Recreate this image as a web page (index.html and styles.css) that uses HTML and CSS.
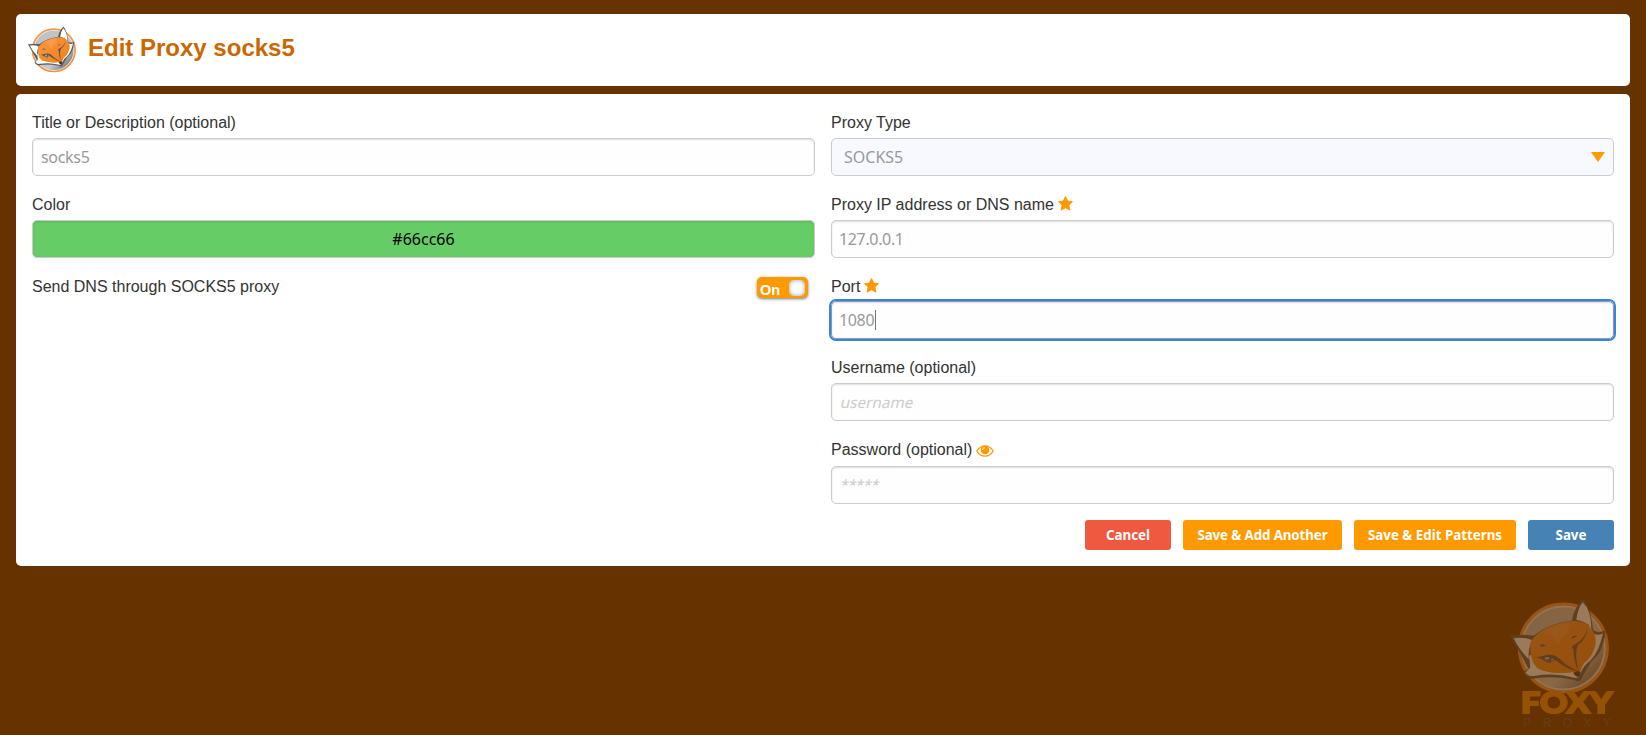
FILE: index.html
```html
<!DOCTYPE html>
<html lang="en">
<head>
<meta charset="utf-8">
<title>Edit Proxy socks5</title>
<link rel="stylesheet" href="styles.css">
</head>
<body>
<svg class="defs" aria-hidden="true">
  <defs>
    <linearGradient id="disc" x1="0" y1="0" x2="1" y2="1">
      <stop offset="0" stop-color="#a9aaad"/><stop offset=".2" stop-color="#c0c1c3"/><stop offset=".65" stop-color="#c9cacb"/><stop offset=".86" stop-color="#77787b"/><stop offset="1" stop-color="#b5b6b8"/>
    </linearGradient>
    <linearGradient id="fur" x1="0" y1="0" x2="1" y2="1">
      <stop offset="0" stop-color="#f79a4c"/><stop offset=".5" stop-color="#f78a2a"/><stop offset="1" stop-color="#f0821f"/>
    </linearGradient>
    <symbol id="fox" viewBox="60 27 297 278" overflow="visible">
      <circle cx="220" cy="174" r="130" fill="url(#disc)"/>
      <circle cx="220" cy="174" r="125" fill="none" stroke="#e8e8e9" stroke-width="7"/>
      <circle cx="220" cy="174" r="132" fill="none" stroke="#f5923e" stroke-width="9"/>
      <path d="M60 137Q98 133 132 137Q175 101 246 92Q253 51 280 28Q302 55 309 121Q326 132 346 121Q344 158 327 190Q312 207 303 215Q283 248 272 270Q265 277 254 270Q185 254 122 267Q104 262 101 246Q116 239 115 235Q96 196 60 137Z" fill="#58585a" stroke="#58585a" stroke-width="1" stroke-linejoin="round"/>
      <path d="M71 145Q100 139 126 150Q114 175 116 208Q88 180 71 145ZM259 90Q263 56 278 37Q303 60 304 113Q286 93 259 90Z" fill="#fff"/>
      <path d="M117 197L121 232L106 248Q116 260 132 258Q193 247 253 263Q267 268 273 247Q281 227 302 211Q327 186 339 130Q326 139 309 130L300 106Z" fill="#fff"/>
      <path d="M122 155Q158 103 247 93Q288 90 303 117Q320 135 317 160Q310 195 292 211Q275 224 270 249Q257 259 247 246Q191 256 145 236Q116 214 122 155Z" fill="url(#fur)"/>
      <path d="M158 130Q194 98 238 100L235 128L213 144L211 164L195 156L187 134Q175 123 158 130Z" fill="#faa763" opacity=".45"/>
      <path d="M127 206Q153 233 199 229Q225 237 245 248Q185 253 145 236ZM312 153Q296 190 266 204Q299 202 316 167Z" fill="#e6911f" opacity=".7"/>
      <path d="M121 198Q145 205 161 197Q190 188 210 207Q221 223 267 245Q240 240 217 225Q200 211 192 210Q181 224 164 214Q159 205 121 198Z" fill="#555456"/>
      <path d="M164 203Q175 197 190 208Q181 222 168 212Z" fill="#d8d8d8"/>
      <circle cx="177" cy="208" r="8" fill="#555456"/><circle cx="174" cy="205" r="3" fill="#fff"/>
      <path d="M294 113Q290 145 263 166Q252 194 267 246Q249 211 251 178Q238 172 257 162Q285 146 294 113ZM149 168Q157 156 172 170Q163 165 158 170ZM245 147Q247 132 263 140Q254 139 245 147Z" fill="#555456"/>
      <path d="M250 249Q262 239 272 247L269 259Q257 263 250 249Z" fill="#333"/>
    </symbol>
    <symbol id="star" viewBox="0 0 15 15">
      <path d="M7.500.6 9.700 5.100l4.700.6-3.500 3.500.9 4.900-4.300-2.400-4.300 2.400.9-4.900L.6 5.700 5.300 5.100z" fill="#f90" stroke="#f90" stroke-linejoin="round"/>
    </symbol>
  </defs>
</svg>

<header class="header">
  <svg class="logo"><use href="#fox"/></svg>
  <h1>Edit Proxy socks5</h1>
</header>

<main class="panel">
  <div class="columns">
    <section class="column">
      <div class="field"><label>Title or Description (optional)</label><div class="input name">socks5</div></div>
      <div class="field"><label>Color</label><div class="input color">#66cc66</div></div>
      <div class="toggle-row">
        <label>Send DNS through SOCKS5 proxy</label>
        <div class="toggle"><span>On</span><i class="knob"></i></div>
      </div>
    </section>
    <section class="column">
      <div class="field"><label>Proxy Type</label>
        <div class="input select"><span>SOCKS5</span><svg class="arrow" viewBox="0 0 14 10"><path d="M0 0h14L7 10z" fill="#f90"/></svg></div></div>
      <div class="field"><label>Proxy IP address or DNS name<svg class="star"><use href="#star"/></svg></label><div class="input number">127.0.0.1</div></div>
      <div class="field port"><label>Port<svg class="star"><use href="#star"/></svg></label><div class="input number focus">1080<i class="caret"></i></div></div>
      <div class="field"><label>Username (optional)</label><div class="input hint"><span>username</span></div></div>
      <div class="field password"><label>Password (optional)<svg class="eye" viewBox="0 0 18 12"><path d="M.8 6Q4 .8 9 .8T17.200 6Q14 11.200 9 11.200T.8 6Z" fill="none" stroke="#f90" stroke-width="1.300"/><circle cx="9" cy="5" r="4.300" fill="#f90"/><path d="M6.500 5Q6.500 2.600 9 2.500" fill="none" stroke="#fff" stroke-width=".8"/></svg></label><div class="input hint stars"><span>*****</span></div></div>
    </section>
  </div>
  <div class="actions">
    <button class="cancel">Cancel</button>
    <button class="add">Save &amp; Add Another</button>
    <button class="edit">Save &amp; Edit Patterns</button>
    <button class="save">Save</button>
  </div>
</main>

<svg class="watermark" viewBox="0 0 468 435">
  <use href="#fox" x="60" y="27" width="297" height="278"/>
  <text class="foxy" x="93" y="368" textLength="274" lengthAdjust="spacingAndGlyphs">FOXY</text>
  <text class="proxy" x="100" y="410" textLength="262" lengthAdjust="spacing">PROXY</text>
</svg>
</body>
</html>
```
FILE: styles.css
```css
* { box-sizing: border-box; }

body {
  margin: 0;
  padding: 14px 16px 0;
  height: 735px;
  overflow: hidden;
  background: #630;
  color: #333;
  font: 16px/20px "Liberation Sans", Arial, sans-serif;
}

.defs { position: absolute; width: 0; height: 0; }

.header {
  display: flex;
  align-items: flex-start;
  gap: 12px;
  height: 72px;
  margin-bottom: 8px;
  padding: 12px;
  background: #fff;
  border-radius: 5px;
}

.logo { width: 48px; height: 46px; overflow: visible; }

h1 {
  margin: 7px 0 0;
  color: #c60;
  font-size: 24px;
  line-height: 30px;
}

.panel {
  height: 472px;
  padding: 18px 16px 0;
  background: #fff;
  border-radius: 5px;
}

.columns {
  display: grid;
  grid-template-columns: 1fr 1fr;
  gap: 16px;
  height: 408px;
}

.field { height: 82px; }
.field.port { height: 81px; }

label { display: block; height: 26px; line-height: 22px; }
.port label { height: 25px; }
.password label { height: 27px; }

.input {
  display: flex;
  align-items: center;
  height: 38px;
  padding: 0 8px;
  border: 1px solid #ccc;
  border-radius: 5px;
  background: #fefefe;
  box-shadow: inset 0 1px 2px #ddd;
  color: #999;
  font-family: "Noto Sans", sans-serif;
  font-size: 16px;
}

.name { letter-spacing: -.3px; }
.number { padding-left: 7px; letter-spacing: -.35px; }
.color { justify-content: center; background: #6c6; color: #000; box-shadow: inset 0 1px 2px #5ab55a; }
.select { justify-content: space-between; padding: 0 8px 0 12px; background: #f8f8ff; box-shadow: none; }
.arrow { width: 14px; height: 10px; }
.focus { border-color: #999; outline: 2px solid #3584e4; }
.caret { width: 1px; height: 20px; margin-left: 1px; background: #777; }
.hint { padding-left: 9px; color: #ccc; font-size: 15.3px; }
.hint span { transform: skewX(-12deg); }
.stars { font-size: 14px; }

.star { width: 15px; height: 15px; margin-left: 4px; vertical-align: -1px; }
.eye { width: 18px; height: 12px; margin-left: 4px; vertical-align: -2px; }

.toggle-row { display: flex; justify-content: space-between; }
.toggle {
  display: flex;
  justify-content: space-between;
  align-items: center;
  width: 51px;
  height: 21px;
  margin: 1px 7px 0 0;
  padding: 0 3px;
  border-radius: 5px;
  background: #f90;
  box-shadow: 0 1px 3px #777;
  color: #fff;
  font: bold 14.5px/24px "Liberation Sans", Arial, sans-serif;
}
.toggle span { padding-top: 4px; }
.knob { width: 16px; height: 16px; border-radius: 5px; background: #fff; box-shadow: inset 0 0 4px #999; }

.actions { display: flex; justify-content: flex-end; gap: 12px; }
button {
  height: 30px;
  padding: 0;
  border: 0;
  border-radius: 3px;
  color: #fff;
  font: bold 13.333px "Noto Sans", sans-serif;
}
.cancel { width: 86px; background: #ee5940; }
.add { width: 159px; background: #f90; letter-spacing: -.1px; }
.edit { width: 162px; background: #f90; }
.save { width: 86px; background: #4682b4; }

.watermark { position: fixed; right: 0; bottom: 0; width: 156px; height: 145px; opacity: .35; }
.foxy { fill: #f08a10; stroke: #f08a10; stroke-width: 6px; font: 900 86px Lato, sans-serif; }
.proxy { fill: #58585a; font: 36px "Liberation Sans", Arial, sans-serif; }
```
